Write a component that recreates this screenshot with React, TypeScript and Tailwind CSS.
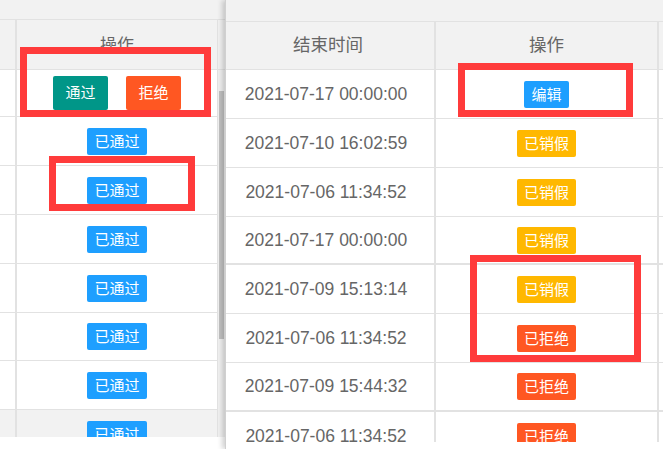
import React from 'react';

const FONT = { fontFamily: '"Liberation Sans", Arial, "Noto Sans CJK SC", sans-serif' };

// badge colours (layui-ish)
const COLORS: Record<string, string> = {
    blue: 'bg-[#1e9fff]',
    warm: 'bg-[#ffb800]',
    danger: 'bg-[#ff5722]',
    teal: 'bg-[#009688]',
};

function Badge({ text, color }: { text: string; color: string }) {
    return (
        <span className={`inline-flex items-center justify-center h-[27px] px-[7px] rounded-[2px] text-white text-[15px] leading-none ${COLORS[color]}`}>
            {text}
        </span>
    );
}

const LEFT_ROWS = [47, 49, 49, 49, 49, 48, 49, 49];

const RIGHT_ROWS = [
    { h: 49, date: '2021-07-17 00:00:00', text: '编辑', color: 'blue' },
    { h: 49, date: '2021-07-10 16:02:59', text: '已销假', color: 'warm' },
    { h: 49, date: '2021-07-06 11:34:52', text: '已销假', color: 'warm' },
    { h: 48, date: '2021-07-17 00:00:00', text: '已销假', color: 'warm' },
    { h: 49, date: '2021-07-09 15:13:14', text: '已销假', color: 'warm' },
    { h: 49, date: '2021-07-06 11:34:52', text: '已拒绝', color: 'danger' },
    { h: 49, date: '2021-07-09 15:44:32', text: '已拒绝', color: 'danger' },
    { h: 49, date: '2021-07-06 11:34:52', text: '已拒绝', color: 'danger' },
];

function LeftPanel() {
    return (
        <div className="w-[225px] flex flex-col h-[449px]">
            {/* top strip */}
            <div className="h-[20px] bg-[#f2f2f2] border-b border-[#e2e2e2]" />
            {/* header */}
            <div className="h-[50px] flex bg-[#f2f2f2] border-b border-[#e2e2e2]">
                <div className="w-[17px] border-r-2 border-[#e2e2e2]" />
                <div className="w-[201px] border-r border-[#e2e2e2] flex items-center justify-center text-[17px] text-[#666] pt-[2px]">操作</div>
            </div>
            {/* body + scrollbar */}
            <div className="flex h-[367px] overflow-hidden">
                <div className="w-[218px] flex flex-col">
                    {LEFT_ROWS.map((h, i) => (
                        <div
                            key={i}
                            style={{ height: h }}
                            className={`shrink-0 flex border-b border-[#e2e2e2] ${i === 7 ? 'bg-[#f2f2f2]' : 'bg-white'}`}
                        >
                            <div className="w-[17px] border-r-2 border-[#e2e2e2]" />
                            <div className="w-[201px] border-r border-[#e2e2e2] flex items-center justify-center gap-[18px]">
                                {i === 0 ? (
                                    <>
                                        <span className="inline-flex items-center justify-center w-[55px] h-[34px] rounded-[2px] bg-[#009688] text-white text-[15px]">通过</span>
                                        <span className="inline-flex items-center justify-center w-[55px] h-[34px] rounded-[2px] bg-[#ff5722] text-white text-[15px]">拒绝</span>
                                    </>
                                ) : (
                                    <Badge text="已通过" color="blue" />
                                )}
                            </div>
                        </div>
                    ))}
                </div>
                {/* scrollbar */}
                <div className="w-[7px] bg-[#f1f1f1] flex flex-col items-center">
                    <div className="h-[21px]" />
                    <div className="w-[5px] h-[248px] bg-[#c1c1c1]" />
                </div>
            </div>
            <div className="flex-1 bg-white" />
        </div>
    );
}

function RightPanel() {
    return (
        <div className="relative w-[438px] flex flex-col h-[449px] border-l border-[#d0d0d0] shadow-[-3px_0_5px_rgba(0,0,0,0.18)] bg-white">
            <div className="h-[22px] bg-[#f2f2f2] border-b border-[#e2e2e2]" />
            <div className="h-[48px] flex bg-[#f2f2f2] border-b border-[#e2e2e2] text-[17.5px] text-[#666]">
                <div className="w-[210px] border-r-2 border-[#e2e2e2] flex items-center justify-center pr-[4px]">结束时间</div>
                <div className="w-[223px] border-r-2 border-[#e2e2e2] flex items-center justify-center">操作</div>
            </div>
            <div className="h-[372px] overflow-hidden flex flex-col">
                {RIGHT_ROWS.map((r, i) => (
                    <div
                        key={i}
                        style={{ height: r.h }}
                        className={`shrink-0 flex ${i === 3 || i === 6 ? 'border-b-2' : 'border-b'} border-[#e2e2e2]`}
                    >
                        <div className="w-[210px] border-r-2 border-[#e2e2e2] flex items-center justify-center pr-[8px] text-[17.5px] text-[#666]">
                            {r.date}
                        </div>
                        <div className="w-[223px] border-r-2 border-[#e2e2e2] flex items-center justify-center">
                            <Badge text={r.text} color={r.color} />
                        </div>
                    </div>
                ))}
            </div>
            <div className="flex-1 bg-white" />
        </div>
    );
}

export default function App() {
    return (
        <div className="relative w-[663px] h-[449px] overflow-hidden bg-white flex" style={FONT}>
            <LeftPanel />
            <RightPanel />

            {/* red annotation boxes */}
            <div className="absolute left-[20px] top-[47px] w-[191px] h-[70px] border-[7px] border-[#ff3b3b]" />
            <div className="absolute left-[49px] top-[156px] w-[146px] h-[55px] border-[7px] border-[#ff3b3b]" />
            <div className="absolute left-[458px] top-[63px] w-[175px] h-[54px] border-[7px] border-[#ff3b3b]" />
            <div className="absolute left-[470px] top-[255px] w-[171px] h-[107px] border-[7px] border-[#ff3b3b]" />
        </div>
    );
}
